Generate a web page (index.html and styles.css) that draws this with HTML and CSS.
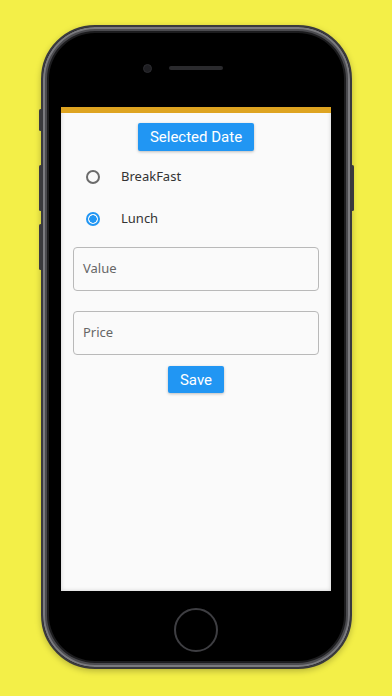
FILE: index.html
```html
<!DOCTYPE html>
<html lang="en">
<head>
  <meta charset="UTF-8">
  <title>Meal Entry</title>
  <link rel="stylesheet" href="styles.css">
</head>
<body>
  <div class="phone">
    <span class="side-btn mute"></span>
    <span class="side-btn vol-up"></span>
    <span class="side-btn vol-down"></span>
    <span class="side-btn power"></span>

    <div class="top-bezel">
      <span class="camera"></span>
      <span class="speaker"></span>
    </div>

    <div class="screen">
      <div class="app-bar"></div>
      <div class="content">
        <button class="button">Selected Date</button>

        <div class="radio-group">
          <label class="radio-row">
            <span class="radio"></span>
            <span class="radio-label">BreakFast</span>
          </label>
          <label class="radio-row">
            <span class="radio checked"></span>
            <span class="radio-label">Lunch</span>
          </label>
        </div>

        <div class="field"><span class="placeholder">Value</span></div>
        <div class="field"><span class="placeholder">Price</span></div>

        <button class="button small">Save</button>
      </div>
    </div>

    <div class="bottom-bezel">
      <span class="home"></span>
    </div>
  </div>
</body>
</html>
```

FILE: styles.css
```css
html, body {
  margin: 0;
  padding: 0;
  height: 100%;
  overflow: hidden;
  background-color: #f3ef48;
}

body {
  display: flex;
  justify-content: center;
  align-items: flex-start;
}

.phone {
  position: relative;
  box-sizing: border-box;
  margin-top: 25px;
  width: 311px;
  height: 644px;
  border-radius: 54px;
  background-color: #000;
  border: 2px solid #3a3a3d;
  box-shadow: inset 0 0 0 2px #7a7a7e, inset 0 0 0 4px #4b4b4f, inset 0 0 0 6px #1c1c1e, 0 2px 6px rgba(0, 0, 0, 0.25);
  display: flex;
  flex-direction: column;
  align-items: center;
}

.side-btn {
  position: absolute;
  width: 3px;
  background-color: #3a3a3d;
  border-radius: 2px;
}

.mute { left: -4px; top: 82px; height: 22px; }
.vol-up { left: -4px; top: 138px; height: 46px; }
.vol-down { left: -4px; top: 197px; height: 46px; }
.power { right: -4px; top: 138px; height: 46px; }

.top-bezel {
  height: 80px;
  width: 100%;
  display: flex;
  justify-content: center;
  align-items: center;
  gap: 17px;
  padding-right: 26px;
  box-sizing: border-box;
}

.camera {
  width: 7px;
  height: 7px;
  border-radius: 50%;
  background-color: #1e1e22;
  border: 1px solid #2c2c30;
  margin-top: 2px;
}

.speaker {
  width: 54px;
  height: 4px;
  border-radius: 3px;
  background-color: #2a2a2d;
  margin-top: 2px;
}

.screen {
  width: 270px;
  height: 484px;
  background-color: #fafafa;
  box-shadow: inset 0 0 4px rgba(0, 0, 0, 0.18);
  display: flex;
  flex-direction: column;
}

.app-bar {
  height: 6px;
  background-color: #dea421;
}

.content {
  display: flex;
  flex-direction: column;
  align-items: center;
  padding: 10px 12px 0 12px;
  font-family: "Noto Sans", Lato, sans-serif;
}

.button {
  background-color: #2196f3;
  color: #fff;
  border: none;
  border-radius: 2px;
  height: 28px;
  padding: 0 12px;
  font-family: Roboto, sans-serif;
  font-size: 15px;
  box-shadow: 0 1px 3px rgba(0, 0, 0, 0.25);
  cursor: pointer;
}

.button.small {
  height: 27px;
  padding: 0 12px;
  margin-top: 11px;
}

.radio-group {
  align-self: stretch;
  display: flex;
  flex-direction: column;
  margin-top: 5px;
  margin-bottom: 7px;
}

.radio-row {
  height: 42px;
  display: flex;
  align-items: center;
  padding-left: 13px;
  gap: 21px;
}

.radio {
  box-sizing: border-box;
  width: 14px;
  height: 14px;
  border-radius: 50%;
  border: 2px solid #6b6b6b;
}

.radio.checked {
  border-color: #2196f3;
  background: radial-gradient(circle, #2196f3 0 3.5px, transparent 4px);
}

.radio-label {
  font-size: 13px;
  color: #333;
  margin-top: -2px;
}

.field {
  box-sizing: border-box;
  align-self: stretch;
  height: 44px;
  border: 1px solid #b9b9b9;
  border-radius: 4px;
  display: flex;
  align-items: center;
  padding-left: 9px;
  margin-bottom: 20px;
}

.field + .field {
  margin-bottom: 0;
}

.placeholder {
  font-size: 13px;
  color: #666;
  margin-top: -3px;
}

.bottom-bezel {
  flex: 1;
  width: 100%;
  display: flex;
  justify-content: center;
  align-items: center;
  padding-top: 2px;
  box-sizing: border-box;
}

.home {
  width: 40px;
  height: 40px;
  border-radius: 50%;
  border: 2px solid #3e3e42;
  background-color: #000;
}
```
